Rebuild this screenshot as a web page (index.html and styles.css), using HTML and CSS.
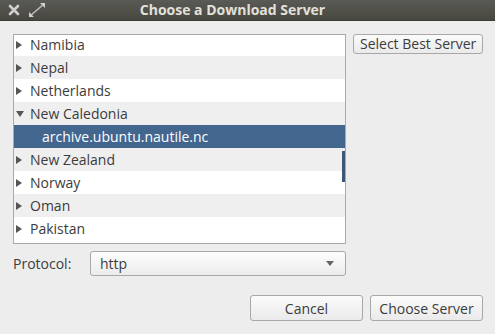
FILE: index.html
```html
<!DOCTYPE html>
<html lang="en">

<head>
    <meta charset="UTF-8">
    <title>Choose a Download Server</title>
    <link rel="stylesheet" href="styles.css">
</head>

<body>
    <div class="titlebar">
        <div class="window-buttons">
            <svg class="btn-close" width="12" height="12" viewBox="0 0 12 12">
                <path d="M2 2 L10 10 M10 2 L2 10" stroke="#cfcfcf" stroke-width="2.6" stroke-linecap="round" />
            </svg>
            <svg class="btn-max" width="18" height="16" viewBox="0 0 18 16">
                <path d="M2 14 L16 2" stroke="#bdbdbd" stroke-width="1.6" />
                <path d="M1 15 L1 10 L6 15 Z M17 1 L17 6 L12 1 Z" fill="#d0d0d0" />
            </svg>
        </div>
        <div class="title">Choose a Download Server</div>
    </div>

    <div class="content">
        <div class="top-row">
            <div class="server-list">
                <div class="rows">
                    <div class="row"><span class="expander"></span>Namibia</div>
                    <div class="row alt"><span class="expander"></span>Nepal</div>
                    <div class="row"><span class="expander"></span>Netherlands</div>
                    <div class="row alt"><span class="expander open"></span>New Caledonia</div>
                    <div class="row selected child">archive.ubuntu.nautile.nc</div>
                    <div class="row alt"><span class="expander"></span>New Zealand</div>
                    <div class="row"><span class="expander"></span>Norway</div>
                    <div class="row alt"><span class="expander"></span>Oman</div>
                    <div class="row"><span class="expander"></span>Pakistan</div>
                </div>
                <div class="scroll-indicator"></div>
            </div>
            <button class="button best">Select Best Server</button>
        </div>

        <div class="protocol-row">
            <label>Protocol:</label>
            <div class="combo">
                <span>http</span>
                <span class="combo-arrow"></span>
            </div>
        </div>

        <div class="actions">
            <button class="button action">Cancel</button>
            <button class="button action">Choose Server</button>
        </div>
    </div>
</body>

</html>
```

FILE: styles.css
```css
body {
    margin: 0;
    background-color: #ededed;
    font-family: "Open Sans", "DejaVu Sans", sans-serif;
    font-size: 14px;
    color: #3c3c3c;
    overflow: hidden;
}

.titlebar {
    height: 20px;
    background: linear-gradient(#5a5a56, #48473f);
    border-bottom: 1px solid #3a3a36;
    display: flex;
    align-items: center;
    position: relative;
}

.window-buttons {
    display: flex;
    align-items: center;
    gap: 8px;
    padding-left: 8px;
}

.title {
    position: absolute;
    left: 0;
    right: 0;
    top: 0;
    line-height: 20px;
    text-align: center;
    color: #e2e0da;
    font-weight: bold;
    font-size: 14px;
    padding-right: 30px;
}

.content {
    padding: 13px 12px 0 13px;
}

.top-row {
    display: flex;
    align-items: flex-start;
    gap: 7px;
}

.server-list {
    width: 332px;
    height: 208px;
    border: 1px solid #a9a9a9;
    background-color: #fff;
    overflow: hidden;
    position: relative;
}

.rows {
    margin-top: -2px;
}

.row {
    height: 23px;
    line-height: 23px;
    display: flex;
    align-items: center;
    padding-left: 2px;
    color: #3c3c3c;
    white-space: nowrap;
}

.row.alt {
    background-color: #efefef;
}

.row.selected {
    background-color: #43668f;
    color: #fff;
}

.row.child {
    padding-left: 28px;
}

.expander {
    width: 0;
    height: 0;
    border-left: 6px solid #555;
    border-top: 4px solid transparent;
    border-bottom: 4px solid transparent;
    margin-right: 8px;
}

.expander.open {
    border-left: 4px solid transparent;
    border-right: 4px solid transparent;
    border-top: 6px solid #555;
    border-bottom: none;
    margin-right: 6px;
}

.scroll-indicator {
    position: absolute;
    right: 0;
    top: 116px;
    width: 3px;
    height: 31px;
    background-color: #3b5878;
}

.button {
    font-family: inherit;
    font-size: 14px;
    color: #3c3c3c;
    background: linear-gradient(#fbfbfb, #eaeaea);
    border: 1px solid #a8a8a8;
    border-radius: 3px;
    padding: 0;
}

.best {
    width: 130px;
    height: 20px;
    line-height: 18px;
}

.protocol-row {
    display: flex;
    align-items: center;
    margin-top: 7px;
}

.protocol-row label {
    width: 77px;
}

.combo {
    height: 23px;
    border: 1px solid #a8a8a8;
    border-radius: 3px;
    background: linear-gradient(#fdfdfd, #ececec);
    display: flex;
    align-items: center;
    justify-content: space-between;
    padding: 0 11px 0 9px;
    width: 234px;
}

.combo-arrow {
    width: 0;
    height: 0;
    border-left: 4px solid transparent;
    border-right: 4px solid transparent;
    border-top: 5px solid #666;
}

.actions {
    display: flex;
    justify-content: flex-end;
    gap: 7px;
    margin-top: 19px;
}

.action {
    width: 113px;
    height: 26px;
}
```
